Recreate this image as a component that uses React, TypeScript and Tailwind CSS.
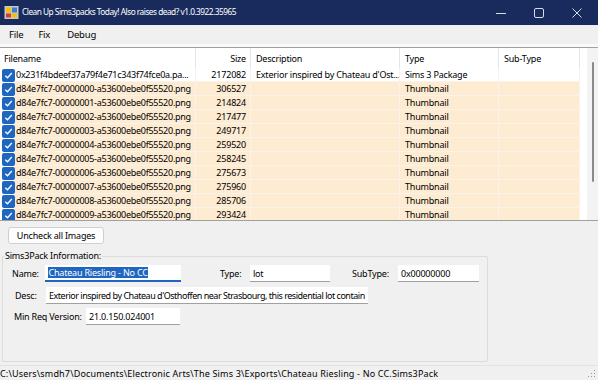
import React from "react";

const rows = [
  { name: "0x231f4bdeef37a79f4e71c343f74fce0a.pa...", size: "2172082", desc: "Exterior inspired by Chateau d'Ost...", type: "Sims 3 Package", pkg: true },
  { name: "d84e7fc7-00000000-a53600ebe0f55520.png", size: "306527", desc: "", type: "Thumbnail" },
  { name: "d84e7fc7-00000001-a53600ebe0f55520.png", size: "214824", desc: "", type: "Thumbnail" },
  { name: "d84e7fc7-00000002-a53600ebe0f55520.png", size: "217477", desc: "", type: "Thumbnail" },
  { name: "d84e7fc7-00000003-a53600ebe0f55520.png", size: "249717", desc: "", type: "Thumbnail" },
  { name: "d84e7fc7-00000004-a53600ebe0f55520.png", size: "259520", desc: "", type: "Thumbnail" },
  { name: "d84e7fc7-00000005-a53600ebe0f55520.png", size: "258245", desc: "", type: "Thumbnail" },
  { name: "d84e7fc7-00000006-a53600ebe0f55520.png", size: "275673", desc: "", type: "Thumbnail" },
  { name: "d84e7fc7-00000007-a53600ebe0f55520.png", size: "275960", desc: "", type: "Thumbnail" },
  { name: "d84e7fc7-00000008-a53600ebe0f55520.png", size: "285706", desc: "", type: "Thumbnail" },
  { name: "d84e7fc7-00000009-a53600ebe0f55520.png", size: "293424", desc: "", type: "Thumbnail" },
];

function Check() {
  return (
    <div className="w-[13px] h-[13px] rounded-[2px] bg-[#1f66c1] flex items-center justify-center shrink-0">
      <svg width="9" height="9" viewBox="0 0 9 9">
        <path d="M1.3 4.7 L3.5 6.8 L7.8 2" stroke="white" strokeWidth="1.3" fill="none" />
      </svg>
    </div>
  );
}

function AppIcon() {
  return (
    <svg width="15" height="15" viewBox="0 0 15 15">
      <rect x="0.5" y="1" width="14" height="13" fill="#c9c9c9" />
      <rect x="2" y="2.5" width="5" height="5" fill="#f2c200" />
      <rect x="8" y="2.5" width="5" height="5" fill="#3a7fd6" />
      <rect x="2" y="8.5" width="5" height="4" fill="#d93b2b" />
      <rect x="8" y="8.5" width="5" height="4" fill="#f2c200" />
    </svg>
  );
}

function Field({ w, text, extra }: { w: string; text: string; extra?: string }) {
  return (
    <div className={`${w} ${extra ?? ""} h-[17px] bg-white flex items-center pl-[3px] overflow-hidden whitespace-nowrap border-b border-[#a0a0a0] shrink-0`}>
      {text}
    </div>
  );
}

export default function App() {
  return (
    <div
      className="w-[598px] h-[380px] flex flex-col bg-[#f0f0f0] text-black text-[9px] leading-none overflow-hidden tracking-[-0.2px]"
      style={{ fontFamily: '"Noto Sans", "Open Sans", sans-serif' }}
    >
      {/* title bar */}
      <div className="h-[25px] bg-[#182b5c] flex items-center shrink-0 text-white">
        <div className="ml-[4px] mr-[3px] flex items-center">
          <AppIcon />
        </div>
        <div className="text-[8.3px] tracking-[-0.5px] whitespace-nowrap">Clean Up Sims3packs Today! Also raises dead? v1.0.3922.35965</div>
        <div className="ml-auto flex items-center h-full">
          <div className="w-[38px] flex justify-center">
            <svg width="10" height="10" viewBox="0 0 10 10"><path d="M0 5.5 H10" stroke="#d8dce6" strokeWidth="1" /></svg>
          </div>
          <div className="w-[38px] flex justify-center">
            <svg width="10" height="10" viewBox="0 0 10 10"><rect x="0.5" y="0.5" width="9" height="9" rx="1.5" fill="none" stroke="#d8dce6" strokeWidth="1" /></svg>
          </div>
          <div className="w-[38px] flex justify-center mr-[2px]">
            <svg width="10" height="10" viewBox="0 0 10 10"><path d="M0.5 0.5 L9.5 9.5 M9.5 0.5 L0.5 9.5" stroke="#d8dce6" strokeWidth="1" /></svg>
          </div>
        </div>
      </div>

      {/* menu */}
      <div className="h-[19px] flex items-center shrink-0 text-[9.5px]">
        <span className="ml-[9px]">File</span>
        <span className="ml-[15px]">Fix</span>
        <span className="ml-[17px]">Debug</span>
      </div>
      <div className="h-[3px] bg-[#f9f9f9] shrink-0" />

      {/* list */}
      <div className="h-[174px] shrink-0 border-t border-b border-[#a0a0a0] bg-white flex">
        <div className="w-[587px] flex flex-col overflow-hidden">
          <div className="h-[20px] flex shrink-0">
            <div className="w-[196px] pl-[4px] flex items-center border-r border-[#e5e5e5]">Filename</div>
            <div className="w-[55px] pr-[4px] flex items-center justify-end border-r border-[#e5e5e5]">Size</div>
            <div className="w-[149px] pl-[5px] flex items-center border-r border-[#e5e5e5]">Description</div>
            <div className="w-[99px] pl-[5px] flex items-center border-r border-[#e5e5e5]">Type</div>
            <div className="w-[81px] pl-[5px] flex items-center border-r border-[#e5e5e5]">Sub-Type</div>
            <div className="flex-1" />
          </div>
          {rows.map((r, i) => (
            <div key={i} className="h-[14px] flex shrink-0 whitespace-nowrap">
              <div className="w-[15px] flex items-center pl-[2px] bg-white shrink-0">
                <Check />
              </div>
              <div className={`w-[565px] flex ${r.pkg ? "bg-white" : "bg-[#fdebd2]"} border-b border-[#fbf3e9]`}>
                <div className="w-[181px] pl-[1px] flex items-center border-r border-[#fbf3e9] overflow-hidden tracking-[-0.27px]">{r.name}</div>
                <div className="w-[55px] pr-[4px] flex items-center justify-end border-r border-[#fbf3e9]">{r.size}</div>
                <div className="w-[149px] pl-[5px] flex items-center border-r border-[#fbf3e9] overflow-hidden">{r.desc}</div>
                <div className="w-[99px] pl-[5px] flex items-center border-r border-[#fbf3e9]">{r.type}</div>
                <div className="w-[81px] border-r border-[#fbf3e9]" />
              </div>
            </div>
          ))}
        </div>
        <div className="flex-1 bg-[#f3f3f3] flex justify-center pt-[14px]">
          <div className="w-[2px] h-[120px] bg-[#8a8a8a] rounded-full ml-[1px]" />
        </div>
      </div>

      {/* button */}
      <div className="h-[33px] shrink-0 flex items-start pt-[6px] pl-[8px]">
        <div className="w-[96px] h-[17px] bg-[#fdfdfd] border border-[#d0d0d0] rounded-[3px] flex items-center justify-center whitespace-nowrap">
          Uncheck all Images
        </div>
      </div>

      {/* group box */}
      <div className="relative h-[106px] shrink-0 ml-[2px] w-[486px] border border-[#dcdcdc] rounded-[2px] mt-[2px] whitespace-nowrap">
        <div className="absolute -top-[6px] left-[1px] bg-[#f0f0f0] px-[1px]">Sims3Pack Information:</div>
        <div className="flex items-center mt-[8px]">
          <span className="ml-[9px] w-[33px] shrink-0">Name:</span>
          <div className="w-[136px] h-[17px] bg-white flex items-center pl-[3px] border-b-2 border-[#1f66c1] shrink-0">
            <span className="bg-[#1f66c1] text-white px-[0.5px] py-[1px]">Chateau Riesling - No CC</span>
          </div>
          <span className="ml-[39px] w-[30px] shrink-0">Type:</span>
          <Field w="w-[80px]" text="lot" />
          <span className="ml-[22px] w-[46px] shrink-0">SubType:</span>
          <Field w="w-[81px]" text="0x00000000" />
        </div>
        <div className="flex items-center mt-[5px]">
          <span className="ml-[12px] w-[31px] shrink-0">Desc:</span>
          <Field w="w-[322px]" extra="tracking-[-0.48px]" text="Exterior inspired by Chateau d'Osthoffen near Strasbourg, this residential lot contain" />
        </div>
        <div className="flex items-center mt-[4px]">
          <span className="ml-[11px] w-[72px] shrink-0">Min Req Version:</span>
          <Field w="w-[94px]" text="21.0.150.024001" />
        </div>
      </div>

      {/* status */}
      <div className="flex-1 mt-[3px] border-t border-[#e3e3e3] flex items-center relative whitespace-nowrap tracking-[0px]">
        <span className="tracking-[0.17px]">C:\Users\smdh7\Documents\Electronic Arts\The Sims 3\Exports\Chateau Riesling - No CC.Sims3Pack</span>
        <svg className="absolute right-[2px] bottom-[2px]" width="10" height="10" viewBox="0 0 10 10">
          <rect x="8" y="2" width="1" height="1" fill="#999" />
          <rect x="5" y="5" width="1" height="1" fill="#999" />
          <rect x="8" y="5" width="1" height="1" fill="#999" />
          <rect x="2" y="8" width="1" height="1" fill="#999" />
          <rect x="5" y="8" width="1" height="1" fill="#999" />
          <rect x="8" y="8" width="1" height="1" fill="#999" />
        </svg>
      </div>
    </div>
  );
}
